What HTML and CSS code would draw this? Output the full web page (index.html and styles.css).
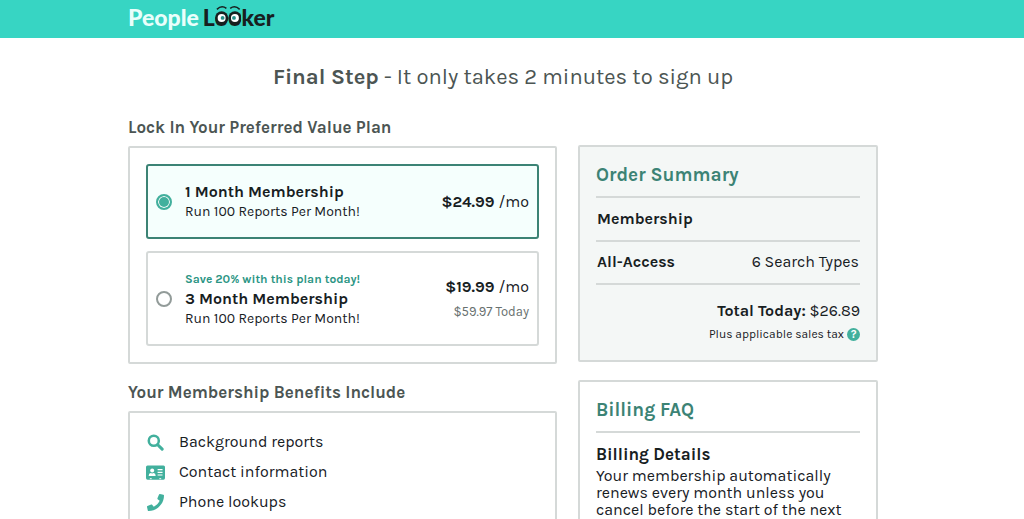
FILE: index.html
```html
<!DOCTYPE html>
<html lang="en">
  <head>
    <meta charset="utf-8">
    <title>PeopleLooker - Sign Up</title>
    <link rel="stylesheet" href="styles.css">
  </head>
  <body>
    <header class="banner">
      <div class="container">
        <a class="logo" href="#"><span class="logo-people">People</span><span>L</span><span class="logo-eyes">oo<svg viewBox="0 0 28 22" aria-hidden="true">
          <path d="M2 4Q7 -1 12 3M16 3Q21 -1 26 4" fill="none" stroke="#17201f" stroke-width="1.6"/>
          <circle cx="7" cy="13" r="7" fill="#17201f"/>
          <circle cx="21" cy="13" r="7" fill="#17201f"/>
          <circle cx="7" cy="13" r="4.2" fill="#fff"/>
          <circle cx="21" cy="13" r="4.2" fill="#fff"/>
          <circle cx="8" cy="13" r="2" fill="#238f86"/>
          <circle cx="20" cy="13" r="2" fill="#238f86"/>
        </svg></span><span>ker</span></a>
      </div>
    </header>

    <main class="container">
      <h1><strong>Final Step</strong> - It only takes 2 minutes to sign up</h1>

      <div class="columns">
        <div class="main-column">
          <h2>Lock In Your Preferred Value Plan</h2>
          <form class="panel plans">
            <label class="plan">
              <input type="radio" name="plan" value="1" checked>
              <span class="plan-info">
                <strong>1 Month Membership</strong>
                <span>Run 100 Reports Per Month!</span>
              </span>
              <span class="plan-price"><span><strong>$24.99</strong> /mo</span></span>
            </label>
            <label class="plan">
              <input type="radio" name="plan" value="3">
              <span class="plan-info">
                <em>Save 20% with this plan today!</em>
                <strong>3 Month Membership</strong>
                <span>Run 100 Reports Per Month!</span>
              </span>
              <span class="plan-price">
                <span><strong>$19.99</strong> /mo</span>
                <small>$59.97 Today</small>
              </span>
            </label>
          </form>

          <h2>Your Membership Benefits Include</h2>
          <ul class="panel benefits">
            <li>
              <svg viewBox="0 0 20 20" aria-hidden="true">
                <circle cx="8" cy="8" r="5.9" fill="none" stroke="#42b09d" stroke-width="3"/>
                <path d="M12.6 12.6L17.8 17.8" stroke="#42b09d" stroke-width="3.6" stroke-linecap="round"/>
              </svg>
              Background reports
            </li>
            <li>
              <svg viewBox="0 0 20 20" aria-hidden="true">
                <rect x="0" y="2.5" width="20" height="15" rx="1.6" fill="#42b09d"/>
                <circle cx="6.5" cy="7.8" r="2.1" fill="#fff"/>
                <path d="M2.8 13.6Q2.8 10.6 5 10.4L6.5 11L8 10.4Q10.2 10.6 10.2 13.6Z" fill="#fff"/>
                <path d="M12.2 7H17.4M12.2 9.8H17.4M12.2 12.6H17.4" stroke="#fff" stroke-width="1.2"/>
                <path d="M4 16.5H6M14 16.5H16" stroke="#fff" stroke-width="1"/>
              </svg>
              Contact information
            </li>
            <li>
              <svg viewBox="0 0 512 512" aria-hidden="true">
                <path fill="#42b09d" d="M493 25L389 1c-11-3-23 3-27 14l-48 112c-4 10-1 21 7 28l61 50c-36 77-99 141-178 178l-50-61c-7-8-18-11-28-7L14 363c-11 4-17 16-14 27l24 104c3 11 12 18 24 18 256 0 464-207 464-464 0-11-8-21-19-23z"/>
              </svg>
              Phone lookups
            </li>
          </ul>
        </div>

        <aside class="side-column">
          <section class="panel summary">
            <h3>Order Summary</h3>
            <table>
              <tr><th scope="row">Membership</th><td></td></tr>
              <tr><th scope="row">All-Access</th><td>6 Search Types</td></tr>
            </table>
            <p class="total"><strong>Total Today:</strong> $26.89</p>
            <p class="tax">Plus applicable sales tax <button type="button" class="help" aria-label="Sales tax help">?</button></p>
          </section>

          <section class="panel faq">
            <h3>Billing FAQ</h3>
            <h4>Billing Details</h4>
            <p>Your membership automatically renews every month unless you cancel before the start of the next</p>
          </section>
        </aside>
      </div>
    </main>
  </body>
</html>
```
FILE: styles.css
```css
* {
  margin: 0;
  padding: 0;
  box-sizing: border-box;
}

/* Page styles */
body {
  font-family: Karla, Roboto, "Liberation Sans", sans-serif;
  font-size: 16px;
  color: #17201f;
  background-color: #fff;
  height: 100vh;
  overflow: hidden;
}

.banner {
  background-color: #37d5c3;
  height: 38px;
}

.container {
  max-width: 768px;
  margin: 0 auto;
  padding-right: 18px;
}

/* Logo */
.logo {
  display: inline-flex;
  font-family: Lato, sans-serif;
  font-size: 23px;
  font-weight: 900;
  line-height: 34px;
  color: #17201f;
  text-decoration: none;
}

.logo-people {
  color: #e9fffb;
  margin-right: 4px;
}

.logo-eyes {
  position: relative;
}

.logo-eyes svg {
  position: absolute;
  left: 0;
  top: 5px;
  width: 100%;
  height: 22px;
}

/* Headings */
h1 {
  font-size: 22px;
  font-weight: 400;
  line-height: 30px;
  text-align: center;
  color: #4c5553;
  padding: 24px 0;
}

h2 {
  font-size: 17px;
  font-weight: 700;
  line-height: 20px;
  color: #4c5553;
  margin-bottom: 9px;
}

h3 {
  font-size: 19px;
  font-weight: 700;
  line-height: 24px;
  color: #3c8375;
  padding-bottom: 9px;
  border-bottom: 2px solid #d5d9d8;
}

h4 {
  font-size: 17px;
  line-height: 20px;
}

/* Layout */
.columns {
  display: grid;
  grid-template-columns: 1fr 300px;
  gap: 21px;
  margin-top: 1px;
}

.side-column {
  padding-top: 28px;
}

.panel {
  border: 2px solid #d5d9d8;
  border-radius: 2px;
  padding: 16px;
  margin-bottom: 18px;
}

/* Plans */
.plans {
  display: flex;
  flex-direction: column;
  gap: 12px;
}

.plan {
  display: flex;
  align-items: center;
  min-height: 75px;
  padding: 16px 8px 15px;
  border: 2px solid #d5d9d8;
  border-radius: 3px;
  cursor: pointer;
}

.plan:has(input:checked) {
  border-color: #3c8375;
  background-color: #f5fffd;
}

.plan input {
  appearance: none;
  width: 16px;
  height: 16px;
  border: 2px solid #929b99;
  border-radius: 50%;
  background-color: #fff;
}

.plan input:checked {
  border-color: #42b09d;
  background-color: #42b09d;
  box-shadow: inset 0 0 0 1px #fff;
}

.plan-info {
  display: flex;
  flex: 1;
  flex-direction: column;
  margin-left: 13px;
  font-size: 14px;
  line-height: 20px;
}

.plan-info strong {
  font-size: 16px;
}

.plan-info em {
  font-size: 12px;
  font-style: normal;
  font-weight: 700;
  color: #2b9584;
}

.plan-price {
  display: flex;
  flex-direction: column;
  gap: 5px;
  text-align: right;
  line-height: 20px;
}

.plan-price small {
  font-size: 13px;
  color: #68716f;
}

/* Benefits */
.benefits {
  list-style: none;
  padding: 14px 16px;
}

.benefits li {
  display: flex;
  align-items: center;
  gap: 14px;
  line-height: 30px;
}

.benefits svg {
  width: 19px;
  height: 19px;
}

.benefits li:first-child svg,
.benefits li:last-child svg {
  padding: 1px;
}

/* Order summary */
.summary {
  background-color: #f4f7f6;
  padding-bottom: 13px;
}

.summary table {
  width: 100%;
  border-collapse: collapse;
}

.summary tr {
  height: 43px;
  border-bottom: 2px solid #d5d9d8;
}

.summary th {
  text-align: left;
}

.summary td {
  text-align: right;
}

.summary th,
.summary td {
  padding: 0 1px 2px;
}

.total {
  margin-top: 16px;
  line-height: 20px;
  text-align: right;
}

.tax {
  display: flex;
  justify-content: flex-end;
  align-items: center;
  gap: 3px;
  font-size: 12px;
  line-height: 26px;
}

.help {
  width: 13px;
  height: 13px;
  border: none;
  border-radius: 50%;
  background-color: #42b09d;
  color: #fff;
  font-family: inherit;
  font-size: 11px;
  font-weight: 700;
  line-height: 13px;
  cursor: pointer;
}

/* Billing FAQ */
.faq h4 {
  margin: 11px 0 3px;
}

.faq p {
  line-height: 17px;
}
```
